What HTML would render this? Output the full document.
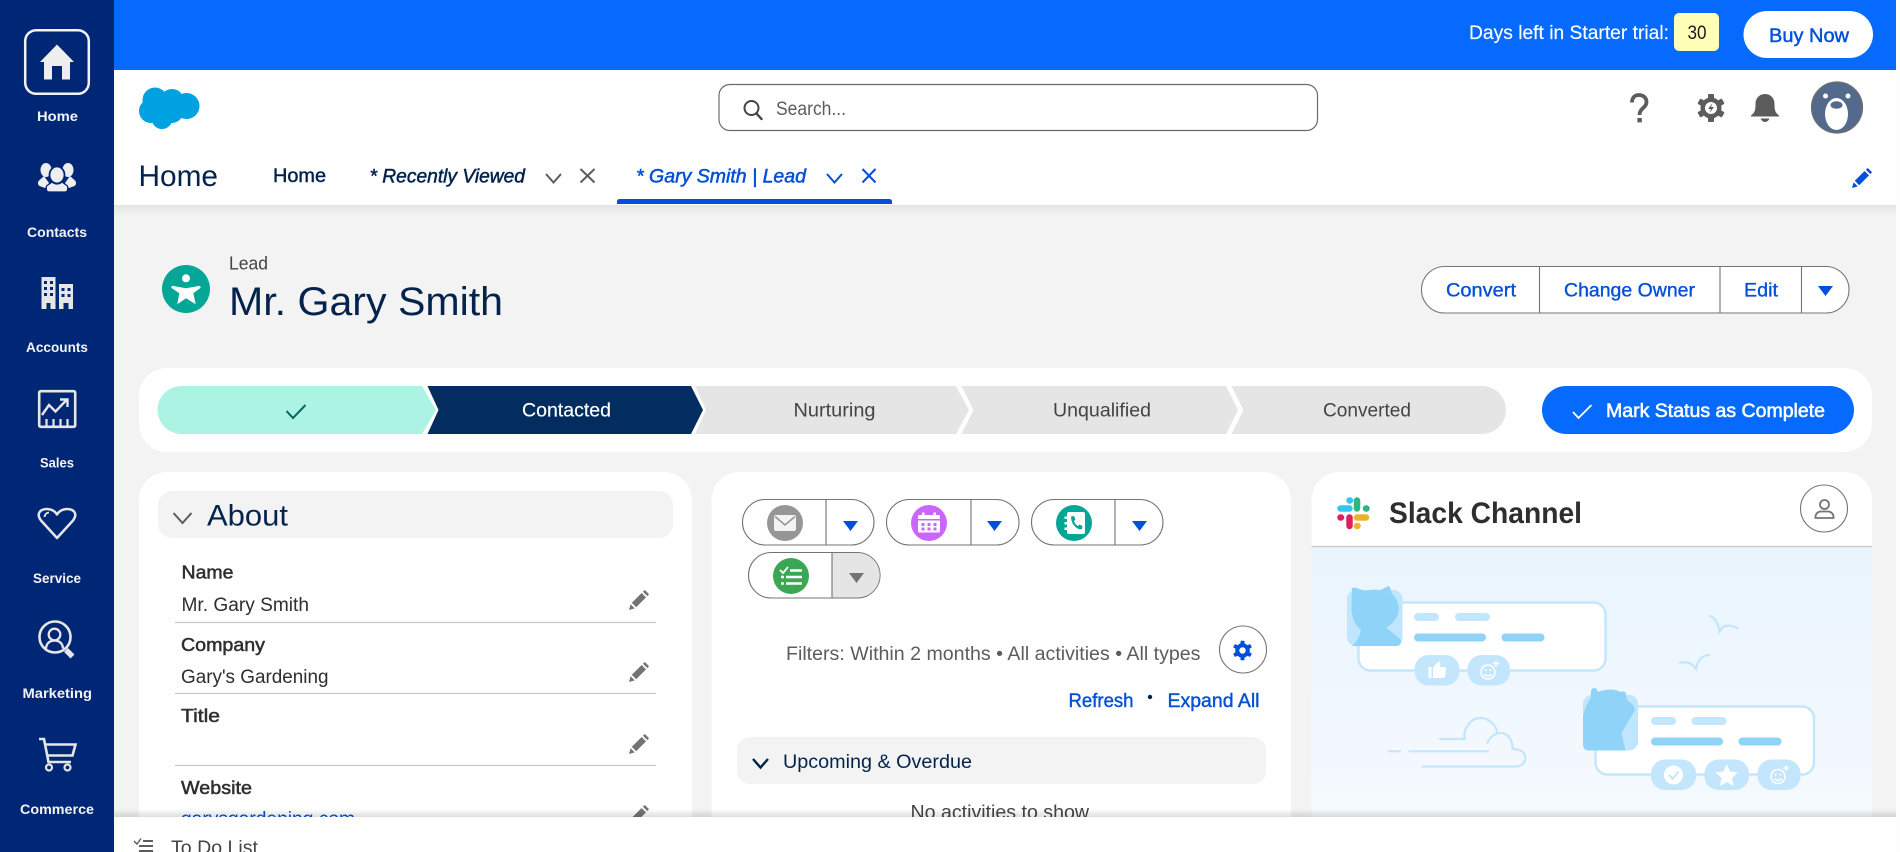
<!DOCTYPE html>
<html lang="en"><head><meta charset="utf-8"><title>Mr. Gary Smith | Lead</title>
<style>
html,body{margin:0;padding:0;width:1900px;height:852px;overflow:hidden;background:#fff}
svg{display:block;font-family:"Liberation Sans",Arial,sans-serif}
</style></head><body>
<svg xmlns="http://www.w3.org/2000/svg" width="1900" height="852" viewBox="0 0 1900 852">
<defs>
<linearGradient id="hs" x1="0" y1="0" x2="0" y2="1"><stop offset="0" stop-color="#e4e4e4"/><stop offset="1" stop-color="#f3f3f3"/></linearGradient>
<linearGradient id="bs" x1="0" y1="0" x2="0" y2="1"><stop offset="0" stop-color="#000" stop-opacity="0"/><stop offset="1" stop-color="#000" stop-opacity=".13"/></linearGradient>
<linearGradient id="sky" x1="0" y1="0" x2="0" y2="1"><stop offset="0" stop-color="#e9f4fd"/><stop offset="1" stop-color="#f6faff"/></linearGradient>
<symbol id="pen" viewBox="0 0 20 20"><path d="M0 20 1.6 14.2 5.8 18.4ZM2.8 12.8 12.6 3 17 7.4 7.2 17.2ZM13.9 1.7 15.2.4Q15.7 0 16.2.4L19.6 3.8Q20 4.3 19.6 4.8L18.3 6.1Z"/></symbol>
</defs>

<rect width="1900" height="852" fill="#f3f3f3"/>
<rect x="114" y="205" width="1786" height="11" fill="url(#hs)"/>

<!-- top bar -->
<rect x="114" width="1786" height="70" fill="#066afe"/>
<text x="1469" y="39" font-size="19" fill="#fff" stroke="#fff" stroke-width=".15" textLength="200" lengthAdjust="spacingAndGlyphs">Days left in Starter trial:</text>
<rect x="1674" y="13" width="45" height="38" rx="5" fill="#ffffb8"/>
<text x="1687.5" y="39" font-size="19" fill="#181818" textLength="19" lengthAdjust="spacingAndGlyphs">30</text>
<rect x="1743.500" y="11" width="129.500" height="47" rx="23.500" fill="#fff"/>
<text x="1769" y="42" font-size="19" fill="#0250d9" stroke="#0250d9" stroke-width=".45" textLength="80" lengthAdjust="spacingAndGlyphs">Buy Now</text>

<!-- header -->
<rect x="114" y="70" width="1786" height="135" fill="#fff"/>
<g fill="#00a1e0"><circle cx="155" cy="100" r="12.500"/><circle cx="172" cy="101" r="12"/><circle cx="186.500" cy="106" r="13"/><circle cx="151" cy="111" r="12"/><circle cx="162" cy="118.500" r="10.500"/><circle cx="172" cy="112" r="11"/></g>
<rect x="719" y="84.500" width="598.500" height="46" rx="11" fill="#fff" stroke="#6b6b6b" stroke-width="1.200"/>
<circle cx="751.500" cy="108" r="7" fill="none" stroke="#444" stroke-width="2"/><path d="M756.500 113.500 761.500 119" stroke="#444" stroke-width="2.400" stroke-linecap="round"/>
<text x="776" y="115" font-size="19" fill="#5c5c5c" textLength="70" lengthAdjust="spacingAndGlyphs">Search...</text>

<!-- help -->
<path d="M1632 102.500C1632 97 1635.500 95 1639 95C1643 95 1646.500 97.500 1646.500 102C1646.500 108 1639.500 108 1639.500 115" fill="none" stroke="#5c5c5c" stroke-width="3.800"/><rect x="1637.400" y="118" width="4.400" height="4.400" fill="#5c5c5c"/>
<!-- gear -->
<g transform="translate(1711 108)" fill="#5c5c5c">
<rect x="-3" y="-14" width="6" height="28" rx="1"/><rect x="-3" y="-14" width="6" height="28" rx="1" transform="rotate(60)"/><rect x="-3" y="-14" width="6" height="28" rx="1" transform="rotate(120)"/>
<circle r="10.500"/><circle r="6" fill="#fff"/>
<path d="M1.500-5 -3 1H0L-1.500 5 3-1H0Z"/>
</g>
<!-- bell -->
<path d="M1765 94C1771 94 1774.500 98.500 1774.500 104C1774.500 110 1775 112.500 1779 115.500Q1779.500 116.500 1778.500 116.500H1751.500Q1750.500 116.500 1751 115.500C1755 112.500 1755.500 110 1755.500 104C1755.500 98.500 1759 94 1765 94ZM1760.500 118.500H1769.500Q1768 122 1765 122Q1762 122 1760.500 118.500Z" fill="#5c5c5c"/>
<!-- avatar -->
<circle cx="1837" cy="107.500" r="25.500" fill="#546a8c" stroke="#6e6e6e" stroke-width="1.200"/>
<ellipse cx="1836.500" cy="114" rx="11.500" ry="16" fill="#fff"/><circle cx="1825.500" cy="96" r="2.500" fill="#fff"/><circle cx="1848" cy="96" r="2.500" fill="#fff"/><ellipse cx="1836.500" cy="105" rx="6" ry="3.800" fill="#546a8c"/>

<!-- tabs -->
<text x="138.500" y="186" font-size="30" fill="#03234d" textLength="79.500" lengthAdjust="spacingAndGlyphs">Home</text>
<text x="273" y="182" font-size="19" fill="#03234d" stroke="#03234d" stroke-width=".45" textLength="53" lengthAdjust="spacingAndGlyphs">Home</text>
<text x="369.500" y="182.500" font-size="19" font-style="italic" fill="#03234d" stroke="#03234d" stroke-width=".5" textLength="155.500" lengthAdjust="spacingAndGlyphs">* Recently Viewed</text>
<path d="M546 174 553.500 182.500 561 174" fill="none" stroke="#5c5c5c" stroke-width="2"/>
<path d="M580.500 169 594.500 182.500M594.500 169 580.500 182.500" fill="none" stroke="#5c5c5c" stroke-width="2"/>
<text x="636" y="182.500" font-size="19" font-style="italic" fill="#0250d9" stroke="#0250d9" stroke-width=".5" textLength="170" lengthAdjust="spacingAndGlyphs">* Gary Smith | Lead</text>
<path d="M827 174 834.500 182.500 842 174" fill="none" stroke="#0250d9" stroke-width="2"/>
<path d="M862.500 169 875.500 182.500M875.500 169 862.500 182.500" fill="none" stroke="#0250d9" stroke-width="2"/>
<path d="M617 204V201.500Q617 199 620 199H889Q892 199 892 201.500V204Z" fill="#0250d9"/>
<use href="#pen" x="1852" y="168" width="20" height="20" fill="#0250d9"/>

<!-- record header -->
<circle cx="186" cy="289" r="24" fill="#04a696"/>
<circle cx="186" cy="278.300" r="4" fill="#fff"/>
<path d="M172 285.700 186 288.300 200 285.700 200.700 287.700 193.300 293.300 195.700 304.300 186 298.300 177.300 304.300 179.300 293.300 171.300 287.700Z" fill="#fff"/>
<text x="229" y="269.500" font-size="18" fill="#444" textLength="39" lengthAdjust="spacingAndGlyphs">Lead</text>
<text x="229" y="315" font-size="40" fill="#03234d" textLength="274" lengthAdjust="spacingAndGlyphs">Mr. Gary Smith</text>

<rect x="1421.500" y="266.500" width="427.500" height="46.500" rx="23.200" fill="#fff" stroke="#747474" stroke-width="1.100"/>
<path d="M1539.500 266.500V313M1720 266.500V313M1801.500 266.500V313" stroke="#747474" stroke-width="1.100"/>
<g font-size="19" fill="#0250d9" stroke="#0250d9" stroke-width=".35">
<text x="1446" y="296.500" textLength="70" lengthAdjust="spacingAndGlyphs">Convert</text>
<text x="1564" y="296.500" textLength="131" lengthAdjust="spacingAndGlyphs">Change Owner</text>
<text x="1744" y="296.500" textLength="34" lengthAdjust="spacingAndGlyphs">Edit</text>
</g>
<path d="M1818 286H1833L1825.500 296Z" fill="#0250d9"/>

<!-- path -->
<rect x="139" y="368" width="1733" height="84" rx="28" fill="#fff"/>
<path d="M181.500 386H422L436 410 422 434H181.500A24 24 0 0 1 181.500 386Z" fill="#acf3e4"/>
<path d="M427.500 386H691L703 410 691 434H427.500L438.500 410Z" fill="#032d60"/>
<path d="M695 386H956L969 410 956 434H695L706 410Z" fill="#e5e5e5"/>
<path d="M961.500 386H1226L1238 410 1226 434H961.500L973.500 410Z" fill="#e5e5e5"/>
<path d="M1231.500 386H1482A24 24 0 0 1 1482 434H1231.500L1243.500 410Z" fill="#e5e5e5"/>
<path d="M286.500 411 293 418 305.500 405" fill="none" stroke="#056764" stroke-width="2"/>
<g font-size="19">
<text x="522" y="416.500" fill="#fff" stroke="#fff" stroke-width=".15" textLength="89" lengthAdjust="spacingAndGlyphs">Contacted</text>
<text x="793.500" y="416.500" fill="#444" textLength="82" lengthAdjust="spacingAndGlyphs">Nurturing</text>
<text x="1053" y="416.500" fill="#444" textLength="98" lengthAdjust="spacingAndGlyphs">Unqualified</text>
<text x="1323" y="416.500" fill="#444" textLength="88" lengthAdjust="spacingAndGlyphs">Converted</text>
</g>
<rect x="1542" y="386" width="312" height="48" rx="24" fill="#066afe"/>
<path d="M1573 412 1578.500 418 1591.500 405" fill="none" stroke="#fff" stroke-width="1.800"/>
<text x="1606" y="417" font-size="19" fill="#fff" stroke="#fff" stroke-width=".55" textLength="219" lengthAdjust="spacingAndGlyphs">Mark Status as Complete</text>

<!-- About card -->
<rect x="139" y="472" width="553" height="420" rx="28" fill="#fff"/>
<rect x="158" y="491" width="515" height="47" rx="14" fill="#f3f3f3"/>
<path d="M173.500 513 182.500 523 191.500 513" fill="none" stroke="#5c5c5c" stroke-width="2"/>
<text x="207" y="525.500" font-size="30" fill="#03234d" textLength="81" lengthAdjust="spacingAndGlyphs">About</text>
<g font-size="18" fill="#2e2e2e" stroke="#2e2e2e" stroke-width=".5">
<text x="181.500" y="578.500" textLength="52" lengthAdjust="spacingAndGlyphs">Name</text>
<text x="181" y="651" textLength="84" lengthAdjust="spacingAndGlyphs">Company</text>
<text x="181" y="722" textLength="39" lengthAdjust="spacingAndGlyphs">Title</text>
<text x="181" y="794" textLength="71" lengthAdjust="spacingAndGlyphs">Website</text>
</g>
<g font-size="19" fill="#2e2e2e">
<text x="181.500" y="611" textLength="127.500" lengthAdjust="spacingAndGlyphs">Mr. Gary Smith</text>
<text x="181" y="683" textLength="147.500" lengthAdjust="spacingAndGlyphs">Gary's Gardening</text>
</g>
<text x="181" y="825" font-size="19" fill="#0250d9" textLength="174" lengthAdjust="spacingAndGlyphs">garysgardening.com</text>
<path d="M175 622.500H656M175 693.500H656M175 765.500H656" stroke="#c9c9c9" stroke-width="1.200"/>
<g fill="#747474">
<use href="#pen" x="629" y="590" width="20" height="20"/>
<use href="#pen" x="629" y="662" width="20" height="20"/>
<use href="#pen" x="629" y="734" width="20" height="20"/>
<use href="#pen" x="629" y="805" width="20" height="20"/>
</g>

<!-- Activity card -->
<rect x="711.500" y="472" width="579.500" height="420" rx="28" fill="#fff"/>
<g fill="#fff" stroke="#747474" stroke-width="1.100">
<rect x="742.500" y="499.500" width="131.500" height="45.500" rx="22.700"/>
<rect x="886.500" y="499.500" width="132.500" height="45.500" rx="22.700"/>
<rect x="1031.500" y="499.500" width="131.500" height="45.500" rx="22.700"/>
<rect x="748.500" y="552.500" width="131.500" height="45.500" rx="22.700"/>
</g>
<path d="M832.500 553H857.500A22.200 22.200 0 0 1 857.500 597.500H832.500Z" fill="#e5e5e5"/>
<path d="M826 499.500V545M971 499.500V545M1115 499.500V545M832 552.500V598" stroke="#747474" stroke-width="1.100"/>
<path d="M843 521H858L850.500 531ZM987 521H1002L994.500 531ZM1132 521H1147L1139.500 531Z" fill="#0250d9"/>
<path d="M849 573H864L856.500 583Z" fill="#747474"/>

<circle cx="785" cy="523" r="18" fill="#969696"/>
<rect x="774" y="515" width="22" height="16" rx="2" fill="#f3f3f3"/>
<path d="M775 516.500 785 525 795 516.500" fill="none" stroke="#969696" stroke-width="1.600"/>

<circle cx="929" cy="523" r="18" fill="#cb65ff"/>
<path d="M919 515H939Q940 515 940 516V519H918V516Q918 515 919 515ZM922 512.500h2.500V515H922ZM933.500 512.500H936V515H933.500ZM918 520.500H940V531Q940 532.500 938.500 532.500H919.500Q918 532.500 918 531Z" fill="#fff"/>
<g fill="#cb65ff"><rect x="921.500" y="523" width="3" height="3"/><rect x="927.500" y="523" width="3" height="3"/><rect x="933.500" y="523" width="3" height="3"/><rect x="921.500" y="527.500" width="3" height="3"/><rect x="927.500" y="527.500" width="3" height="3"/><rect x="933.500" y="527.500" width="3" height="3"/></g>

<circle cx="1074" cy="523" r="18" fill="#04a696"/>
<path d="M1069 512H1083Q1085 512 1085 514V532Q1085 534 1083 534H1069Q1067 534 1067 532V530H1064.500V527.500H1067V524.500H1064.500V522H1067V519H1064.500V516.500H1067V514Q1067 512 1069 512Z" fill="#fff"/>
<path d="M1071 516.500 1074 516 1075.500 519.500 1074 521Q1075 524.500 1078 526L1079.500 524.500 1082.500 526 1082 529Q1079 530 1075.500 527Q1071 523 1071 516.500Z" fill="#04a696"/>

<circle cx="791" cy="576" r="18" fill="#3ba755"/>
<path d="M780 570 783 573 788 567" fill="none" stroke="#fff" stroke-width="1.800"/>
<path d="M790 570.500H802M786 577H802M786 583.500H802" stroke="#fff" stroke-width="2.400"/>
<circle cx="782.500" cy="577" r="1.500" fill="#fff"/><circle cx="782.500" cy="583.500" r="1.500" fill="#fff"/>

<text x="786" y="660" font-size="19" fill="#5c5c5c" textLength="414.500" lengthAdjust="spacingAndGlyphs">Filters: Within 2 months • All activities • All types</text>
<circle cx="1243" cy="649.500" r="23.500" fill="#fff" stroke="#747474" stroke-width="1.100"/>
<g transform="translate(1242.500 650.500)" fill="#0250d9">
<rect x="-2" y="-9.800" width="4" height="19.600" rx=".7"/><rect x="-2" y="-9.800" width="4" height="19.600" rx=".7" transform="rotate(60)"/><rect x="-2" y="-9.800" width="4" height="19.600" rx=".7" transform="rotate(120)"/>
<circle r="7.300"/><circle r="3.200" fill="#fff"/>
</g>
<g font-size="19" fill="#0250d9" stroke="#0250d9" stroke-width=".4">
<text x="1068.500" y="707" textLength="65" lengthAdjust="spacingAndGlyphs">Refresh</text>
<text x="1167.500" y="707" textLength="92" lengthAdjust="spacingAndGlyphs">Expand All</text>
</g>
<circle cx="1150" cy="697" r="2.200" fill="#03234d"/>
<rect x="737" y="737" width="529" height="47" rx="13" fill="#f3f3f3"/>
<path d="M753 759 760.500 767.500 768 759" fill="none" stroke="#03234d" stroke-width="2.400"/>
<text x="783" y="768" font-size="19" fill="#03234d" textLength="189" lengthAdjust="spacingAndGlyphs">Upcoming &amp; Overdue</text>
<text x="910.500" y="818.500" font-size="19" fill="#444" textLength="178.500" lengthAdjust="spacingAndGlyphs">No activities to show</text>

<!-- Slack card -->
<path d="M1311.500 547V500A28 28 0 0 1 1339.500 472H1844A28 28 0 0 1 1872 500V547Z" fill="#fff"/>
<rect x="1311.500" y="547" width="560.500" height="280" fill="url(#sky)"/>
<path d="M1311.500 546.500H1872" stroke="#c9c9c9" stroke-width="1.200"/>
<g fill="none" stroke-linecap="round" stroke-width="6.500">
<path d="M1340.500 508.500H1349.500M1349.500 500.500H1350" stroke="#36c5f0"/>
<path d="M1357 500.500V508.500M1366 508.500H1366.500" stroke="#2eb67d"/>
<path d="M1357 517.500H1366M1357 526H1357.500" stroke="#ecb22e" stroke-width="6.500"/>
<path d="M1349.500 517.500V526M1340.500 517.500H1341" stroke="#e01e5a"/>
</g>
<text x="1389" y="523" font-size="30" font-weight="bold" fill="#2e2e2e" textLength="193" lengthAdjust="spacingAndGlyphs">Slack Channel</text>
<circle cx="1824" cy="508.500" r="23.500" fill="#fff" stroke="#747474" stroke-width="1.100"/>
<circle cx="1824.500" cy="504.500" r="4.500" fill="none" stroke="#747474" stroke-width="1.800"/>
<path d="M1815.500 518Q1815 513 1820 511.500H1829Q1834 513 1833.500 518Z" fill="none" stroke="#747474" stroke-width="1.800"/>

<!-- illustration -->
<g fill="#fff" stroke="#c4e6fd" stroke-width="2.400">
<rect x="1358.500" y="602.500" width="247" height="68" rx="12"/>
<rect x="1595.500" y="706.500" width="218.500" height="68" rx="12"/>
</g>
<rect x="1347" y="590" width="55.500" height="56" rx="9" fill="#c0e5fe"/>
<path d="M1352 588Q1356 587 1358 588.500L1365 591Q1372 589 1380.500 590L1388.500 586Q1390.500 587 1391.500 593Q1400 602 1398.500 610Q1398 620 1386 628Q1395 634 1401 640Q1402 645 1397 646H1352Q1360 638 1361 630Q1351 622 1351.500 606Z" fill="#8fd3f8"/>
<rect x="1583" y="695" width="55" height="55.500" rx="9" fill="#c0e5fe"/>
<path d="M1589 750.500Q1583 750.500 1583 744V716Q1586 704 1591 698Q1590 688 1594 688Q1597 688 1598 692Q1610 687 1621 692Q1625 690 1626 694L1627 700Q1634 704 1635 710L1621.500 733 1625.500 750.500Z" fill="#8fd3f8"/>
<g fill="#c4e6fd">
<rect x="1414" y="613" width="25" height="8" rx="4"/><rect x="1455" y="613" width="35" height="8" rx="4"/>
<rect x="1651" y="717" width="25" height="8" rx="4"/><rect x="1691.500" y="717" width="35" height="8" rx="4"/>
<rect x="1414.500" y="655" width="45" height="30.500" rx="14"/><rect x="1467.500" y="655" width="42.500" height="30.500" rx="14"/>
<rect x="1651" y="759.500" width="45" height="30.500" rx="14"/><rect x="1704.500" y="759.500" width="44.500" height="30.500" rx="14"/><rect x="1757.500" y="759.500" width="43" height="30.500" rx="14"/>
</g>
<g fill="#8fd3f8">
<rect x="1414" y="633.500" width="72" height="8" rx="4"/><rect x="1501.500" y="633.500" width="43" height="8" rx="4"/>
<rect x="1651" y="737.500" width="72" height="8" rx="4"/><rect x="1738.500" y="737.500" width="43" height="8" rx="4"/>
</g>
<path d="M1428.500 667h3v11h-3ZM1433 667.500 1438 662Q1440 661 1440.500 663L1440 667H1445Q1446.500 668 1446 670L1445 676.500Q1444.500 678 1443 678H1433Z" fill="#fff"/>
<g fill="none" stroke="#fff" stroke-width="1.500">
<circle cx="1488" cy="672" r="7"/><path d="M1484.500 674Q1488 678 1491.500 674M1493 663.500H1499M1496 660.500V666.500"/>
<circle cx="1778" cy="776.500" r="7"/><path d="M1774.500 778.500Q1778 782.500 1781.500 778.500M1783 768H1789M1786 765V771"/>
</g>
<circle cx="1485.500" cy="670" r="1" fill="#fff"/><circle cx="1490.500" cy="670" r="1" fill="#fff"/>
<circle cx="1775.500" cy="774.500" r="1" fill="#fff"/><circle cx="1780.500" cy="774.500" r="1" fill="#fff"/>
<circle cx="1673.500" cy="775" r="9.500" fill="#fff"/><path d="M1669 775 1672.500 779 1678.500 771.500" fill="none" stroke="#c4e6fd" stroke-width="2"/>
<path d="M1726.700 764 1730 771.500 1738 772.500 1732 778 1733.500 786 1726.700 782 1720 786 1721.500 778 1715.500 772.500 1723.500 771.500Z" fill="#fff"/>
<g fill="none" stroke="#c4e6fd" stroke-width="2.200" stroke-linecap="round">
<path d="M1710 616Q1717 618 1719.500 631.500Q1724 622 1737.500 628"/>
<path d="M1680 663Q1690 660 1696 669Q1698 656 1709 655"/>
<path d="M1440 739H1464.500C1463 728 1471 718 1480 718C1489 718 1496 725 1497 732"/>
<path d="M1487.500 743C1490 736 1496 733 1501 733C1508 733 1513 741 1512.500 749C1521 749 1525.500 753 1525.500 758C1525.500 763 1521 766.500 1515 766.500H1422.500"/>
<path d="M1388.500 751.300H1400M1409.500 751.300H1488"/>
</g>

<!-- bottom bar -->
<rect x="114" y="809" width="1786" height="8" fill="url(#bs)"/>
<rect x="114" y="817" width="1786" height="35" fill="#fff"/>
<path d="M134 841 137 844 141 838.500" fill="none" stroke="#5c5c5c" stroke-width="1.400"/>
<path d="M143 841H153M139 846H153M139 851H153" stroke="#5c5c5c" stroke-width="2"/>
<text x="171" y="854" font-size="19" fill="#444" textLength="87" lengthAdjust="spacingAndGlyphs">To Do List</text>

<!-- right strip -->
<rect x="1896" width="4" height="852" fill="#fdfdfd"/>

<!-- sidebar -->
<rect width="114" height="852" fill="#002775"/>
<rect x="25.200" y="30.200" width="63.600" height="63.600" rx="11" fill="none" stroke="#f3f3f3" stroke-width="2.500"/>
<path d="M57 44.500 74 62H70V79.500H62V66H52V79.500H44V62H40Z" fill="#eee"/>
<g fill="#eee">
<ellipse cx="46" cy="170" rx="5.500" ry="7"/><path d="M44 176 49 183 45 188 39.500 186Q37 184 38.500 181Z"/>
<ellipse cx="68" cy="170" rx="5.500" ry="7"/><path d="M70 176 65 183 69 188 74.500 186Q77 184 75.500 181Z"/>
<ellipse cx="57" cy="175" rx="7.500" ry="8.500" stroke="#002775" stroke-width="1.800"/><path d="M52 182 46.500 186Q45.500 192 49 192H65Q68.500 192 67.500 186L62 182Q57 186 52 182Z" stroke="#002775" stroke-width="1.200"/>
</g>
<path fill-rule="evenodd" fill="#e6e6e6" d="M41.500 277H55.500V309H50.500V303H46.500V309H41.500ZM44 281v3h3v-3ZM50 281v3h3v-3ZM44 287v3h3v-3ZM50 287v3h3v-3ZM44 293v3h3v-3ZM50 293v3h3v-3ZM59 284H73V309H68.500V303H63.500V309H59ZM61.500 288v3h3v-3ZM67.500 288v3h3v-3ZM61.500 294v3h3v-3ZM67.500 294v3h3v-3Z"/>
<g fill="none" stroke="#e6e6e6">
<rect x="39.200" y="391.200" width="36" height="35.600" rx="1.500" stroke-width="2.600"/>
<path d="M42 415 49 405 55.500 411.500 66.500 400M60 399.500H67.500V407" stroke-width="2.400"/>
<path d="M46.500 426V419M53.500 426V419M60.500 426V419M67.500 426V419" stroke-width="2.200"/>
<path d="M57 538 41 520.500C35.500 513 41 509 47 509C51 509 55 511 57 514.500C59 511 63 509 67 509C73 509 78.500 513 73 520.500Z" stroke-width="2.500" stroke-linejoin="round"/>
<path d="M44.500 517Q45 513 49 512.500" stroke-width="1.800"/>
<circle cx="55" cy="637" r="15.500" stroke-width="2.600"/>
<circle cx="54.500" cy="634.500" r="5.800" stroke-width="2.300"/>
<path d="M46 648.500Q46.500 641 54.500 640.500Q62.500 641 63 648.500" stroke-width="2.300"/>
<path d="M66 650 72.500 656.500" stroke-width="5.500"/>
<path d="M39 739H44L48.500 762H71" stroke-width="2.600"/>
<path d="M45 744.500H75.500L72.500 755.500H47" stroke-width="2.600"/>
<circle cx="49" cy="767.500" r="3" stroke-width="2.200"/>
<circle cx="67.500" cy="767.500" r="3" stroke-width="2.200"/>
</g>
<g font-size="14" font-weight="bold" fill="#f3f3f3">
<text x="37" y="121" textLength="41" lengthAdjust="spacingAndGlyphs">Home</text>
<text x="27" y="237" textLength="60" lengthAdjust="spacingAndGlyphs">Contacts</text>
<text x="26" y="352" textLength="62" lengthAdjust="spacingAndGlyphs">Accounts</text>
<text x="40" y="467.500" textLength="34" lengthAdjust="spacingAndGlyphs">Sales</text>
<text x="33" y="583" textLength="48" lengthAdjust="spacingAndGlyphs">Service</text>
<text x="22.500" y="698" textLength="69.500" lengthAdjust="spacingAndGlyphs">Marketing</text>
<text x="20" y="814" textLength="74" lengthAdjust="spacingAndGlyphs">Commerce</text>
</g>
</svg>
</body></html>
